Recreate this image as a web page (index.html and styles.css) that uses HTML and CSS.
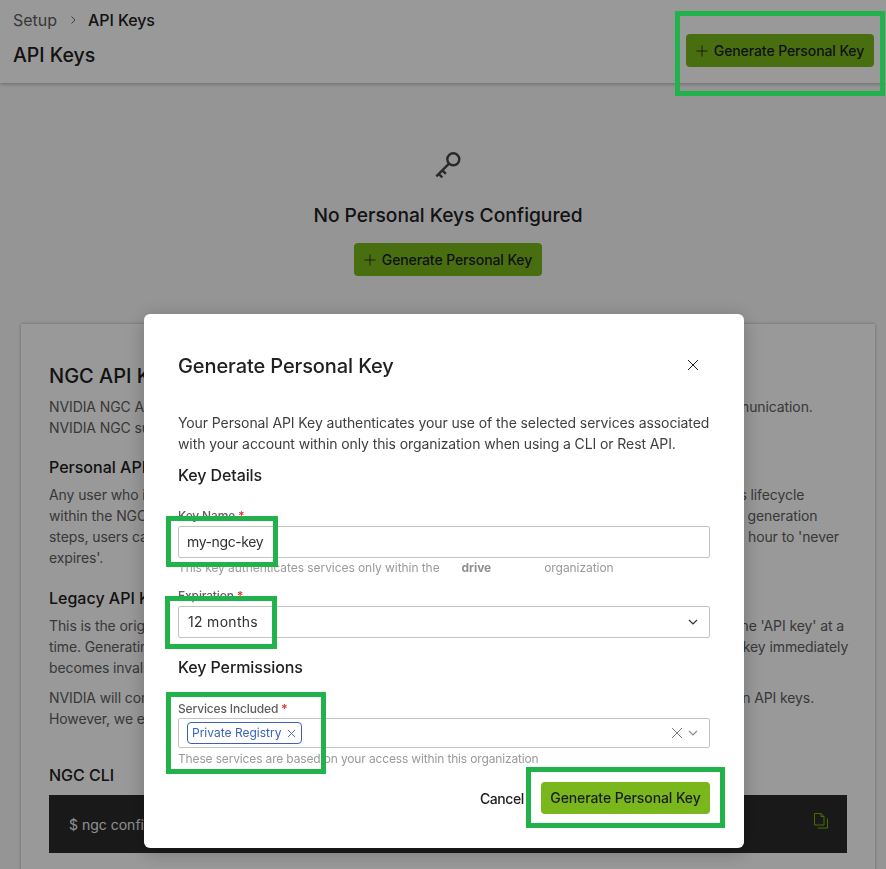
FILE: index.html
```html
<!DOCTYPE html>
<html lang="en">
<head>
<meta charset="utf-8">
<title>API Keys</title>
<link rel="stylesheet" href="styles.css">
</head>
<body>
<div class="page">
  <header class="topbar">
    <div class="topbar-left">
      <nav class="crumbs"><span class="crumb-muted">Setup</span>
        <svg class="crumb-sep" viewBox="0 0 8 10"><path d="M2.5 1.5 6 5 2.5 8.5"/></svg>
        <span class="crumb-current">API Keys</span></nav>
      <h1 class="page-title">API Keys</h1>
    </div>
    <button class="btn btn-primary"><svg class="plus" viewBox="0 0 14 14"><path d="M7 .5v13M.5 7h13"/></svg>Generate Personal Key</button>
  </header>

  <section class="empty">
    <svg class="key-icon" viewBox="0 0 30 30"><circle cx="20.3" cy="9.3" r="6"/><path d="M16 13.6 3.3 26.3M9.3 20.3l3.6 3.6M5.7 23.9l3.6 3.4"/></svg>
    <h2 class="empty-title">No Personal Keys Configured</h2>
    <button class="btn btn-primary"><svg class="plus" viewBox="0 0 14 14"><path d="M7 .5v13M.5 7h13"/></svg>Generate Personal Key</button>
  </section>

  <section class="card">
    <h2 class="card-title">NGC API Keys</h2>
    <p class="para">NVIDIA NGC API keys are used to authenticate your client tools and services for any secure NGC API communication.<br>NVIDIA NGC supports two types of API keys.</p>
    <h3 class="card-sub">Personal API Key</h3>
    <p class="para">Any user who is a member of an organization can easily create a new Personal API Key and can manage its lifecycle<br>within the NGC portal without waiting for any administrator support or approval. During each of the API key generation<br>steps, users can select the services included and choose an expiration time that spans anywhere from one hour to 'never<br>expires'.</p>
    <h3 class="card-sub sub-legacy">Legacy API Key</h3>
    <p class="para">This is the original API key type offered on NGC. Each user is able to hold and later use, at any time, only one 'API key' at a<br>time. Generating a new key through the NGC portal will also revoke the previous one, and then that former key immediately<br>becomes invalid.</p>
    <p class="para">NVIDIA will continue to support both types of keys, and customers can keep on running on legacy based on API keys.<br>However, we encourage customers to migrate to Personal API Keys.</p>
    <h3 class="card-sub cli-title">NGC CLI</h3>
    <div class="code">
      <span class="code-text">$ ngc config set</span>
      <svg class="copy" viewBox="0 0 14 16"><path d="M.5.5h6.500L10 3.500v8.500H.5zM7 .5v3h3M3.500 15H13.500V5.500"/></svg>
    </div>
  </section>
</div>

<div class="scrim">
  <div class="modal">
    <div class="modal-head">
      <h2 class="modal-title">Generate Personal Key</h2>
      <svg class="close" viewBox="0 0 12 12"><path d="M1 1l10 10M11 1 1 11"/></svg>
    </div>
    <p class="modal-intro">Your Personal API Key authenticates your use of the selected services associated<br>with your account within only this organization when using a CLI or Rest API.</p>
    <h3 class="modal-sub">Key Details</h3>
    <div class="field field-name">
      <label class="label">Key Name <span class="req">*</span></label>
      <div class="control control-name">my-ngc-key</div>
      <div class="help help-split"><span>This key authenticates services only within the</span><b class="org">drive</b><span>organization</span></div>
    </div>
    <div class="field field-exp">
      <label class="label">Expiration <span class="req">*</span></label>
      <div class="control control-select"><span class="months">12 months</span>
        <svg class="chev" viewBox="0 0 10 6"><path d="M1 1l4 4 4-4"/></svg></div>
    </div>
    <h3 class="modal-sub sub-perm">Key Permissions</h3>
    <div class="field field-svc">
      <label class="label">Services Included <span class="req">*</span></label>
      <div class="control control-multi">
        <span class="tag">Private Registry<svg class="tag-x" viewBox="0 0 10 10"><path d="M1 1l8 8M9 1 1 9"/></svg></span>
        <span class="multi-icons">
          <svg class="clear" viewBox="0 0 12 12"><path d="M1 1l10 10M11 1 1 11"/></svg>
          <svg class="chev chev-light" viewBox="0 0 10 6"><path d="M1 1l4 4 4-4"/></svg>
        </span>
      </div>
      <div class="help help-svc">These services are based on your access within this organization</div>
    </div>
    <div class="modal-foot">
      <span class="cancel">Cancel</span>
      <button class="btn btn-live">Generate Personal Key</button>
    </div>
  </div>
</div>

<div class="mark mark-top"></div>
<div class="mark mark-name"></div>
<div class="mark mark-exp"></div>
<div class="mark mark-svc"></div>
<div class="mark mark-submit"></div>
</body>
</html>
```
FILE: styles.css
```css
* { box-sizing: border-box; }
html, body { margin: 0; height: 100%; overflow: hidden; }
body { font-family: Inter, "Noto Sans", sans-serif; color: #202020; background: #f9f9f9; }
h1, h2, h3, p { margin: 0; font-weight: 500; }
.page { display: flex; flex-direction: column; height: 869px; overflow: hidden; }

.topbar { flex: none; height: 83px; background: #fff; box-shadow: 0 1px 4px rgba(0,0,0,.3); padding: 10px 12px 0 13px; display: flex; justify-content: space-between; }
.topbar-left { display: flex; flex-direction: column; }
.crumbs { display: flex; align-items: center; font-size: 16px; line-height: 20px; height: 20px; }
.crumb-muted { color: #5e5e5e; font-weight: 400; }
.crumb-sep { width: 8px; height: 10px; margin: 0 11px 0 12px; fill: none; stroke: #666; stroke-width: 1; }
.crumb-current { font-weight: 500; letter-spacing: -.1px; }
.page-title { font-size: 19.500px; line-height: 26px; margin-top: 12px; }

.btn { border: 0; font: 450 14px/20px Inter, "Noto Sans", sans-serif; letter-spacing: -.1px; color: #1c1c1c; border-radius: 4px; height: 33px; display: inline-flex; align-items: center; justify-content: center; padding: 0; width: 188px; }
.btn-primary { background: #7ab71c; gap: 6px; }
.topbar .btn { margin-top: 24px; }
.plus { width: 12px; height: 12px; fill: none; stroke: #202020; stroke-width: 1; }

.empty { flex: none; display: flex; flex-direction: column; align-items: center; height: 241px; padding: 67px 0 0 10px; }
.key-icon { width: 30px; height: 30px; fill: none; stroke: #444; stroke-width: 2.400; }
.empty-title { font-size: 19.200px; line-height: 26px; margin-top: 22px; margin-bottom: 15px; }

.card { flex: none; margin: 0 11px 0 21px; background: #fff; height: 600px; padding: 39px 28px 0; box-shadow: 0 0 3px rgba(0,0,0,.3); }
.card-title { font-size: 20px; line-height: 26px; margin-bottom: 7px; }
.para { font-size: 14px; line-height: 21px; letter-spacing: -.1px; color: #5e5e5e; font-weight: 400; margin-bottom: 9px; white-space: nowrap; }
.card-sub { font-size: 16px; line-height: 22px; margin: 18px 0 6px; }
.sub-legacy { margin-top: 19px; }
.cli-title { margin-top: 35px; margin-bottom: 9px; }
.code { background: #2b2b2b; height: 58px; display: flex; align-items: center; justify-content: space-between; padding: 0 19px 0 20px; font-size: 14px; }
.code-text { color: #eee; }
.copy { width: 14px; height: 16px; margin-bottom: 7px; fill: none; stroke: #76b900; stroke-width: 1; }

.scrim { position: fixed; inset: 0; background: rgba(0,0,0,.4); padding: 314px 0 0 144px; }
.modal { width: 600px; height: 534px; background: #fff; border-radius: 6px; padding: 38px 34px 0; box-shadow: 0 4px 20px rgba(0,0,0,.25); }
.modal-head { display: flex; justify-content: space-between; align-items: center; height: 28px; }
.modal-title { font-size: 20px; line-height: 28px; letter-spacing: -.1px; }
.close { width: 12px; height: 12px; margin: 0 11px 2px 0; fill: none; stroke: #202020; stroke-width: 1; }
.modal-intro { font-size: 14px; line-height: 21px; letter-spacing: -.1px; color: #3f3f3f; font-weight: 400; margin-top: 32px; white-space: nowrap; }
.modal-sub { font-size: 16px; line-height: 22px; margin-top: 10px; letter-spacing: -.1px; }
.field { display: flex; flex-direction: column; }
.label { font-size: 12px; line-height: 16px; color: #5e5e5e; font-weight: 450; letter-spacing: -.15px; }
.req { color: #e02d2d; }
.control { height: 32px; border: 1px solid #c4c4c4; border-radius: 2px; font-size: 14px; line-height: 30px; padding: 0 8px; margin-top: 2px; color: #303030; }
.control-name { letter-spacing: -.4px; }
.help { font-size: 12px; line-height: 16px; color: #9a9a9a; margin-top: 2px; letter-spacing: -.06px; }
.help-svc { letter-spacing: -.15px; margin-top: 3px; }
.help-split { display: flex; }
.org { font-weight: 700; color: #8f8f8f; margin: 0 53px 0 22px; }
.field-name { margin-top: 22px; }
.field-exp { margin-top: 12px; }
.control-select, .control-multi { display: flex; justify-content: space-between; align-items: center; }
.months { padding-left: 1px; letter-spacing: .3px; }
.chev { width: 10px; height: 6px; margin-right: 3px; fill: none; stroke: #303030; stroke-width: 1.200; }
.chev-light { stroke: #8a8a8a; margin-right: 11px; }
.sub-perm { margin-top: 18px; }
.field-svc { margin-top: 23px; }
.control-multi { height: 30px; padding-right: 0; margin-top: 1px; }
.tag { height: 22px; border: 1px solid #3a62b8; border-radius: 4px; color: #3a62b8; font-size: 12px; line-height: 20px; padding: 0 5px 0 4px; display: inline-flex; align-items: center; gap: 6px; }
.tag-x { width: 9px; height: 9px; fill: none; stroke: #3a62b8; stroke-width: 1; }
.multi-icons { display: flex; align-items: center; gap: 5px; }
.clear { width: 12px; height: 12px; fill: none; stroke: #777; stroke-width: 1; }
.modal-foot { display: flex; justify-content: flex-end; align-items: center; gap: 17px; margin-top: 15px; }
.cancel { font-size: 14px; font-weight: 450; letter-spacing: -.4px; }
.btn-live { background: #7ab71c; width: 169px; height: 32px; }

.mark { position: fixed; border: 5px solid #21b24b; }
.mark-top { left: 675px; top: 11px; width: 210px; height: 85px; }
.mark-name { left: 166px; top: 516px; width: 112px; height: 51px; }
.mark-exp { left: 165px; top: 596px; width: 112px; height: 53px; }
.mark-svc { left: 166px; top: 692px; width: 160px; height: 82px; }
.mark-submit { left: 526px; top: 767px; width: 199px; height: 61px; }
```
